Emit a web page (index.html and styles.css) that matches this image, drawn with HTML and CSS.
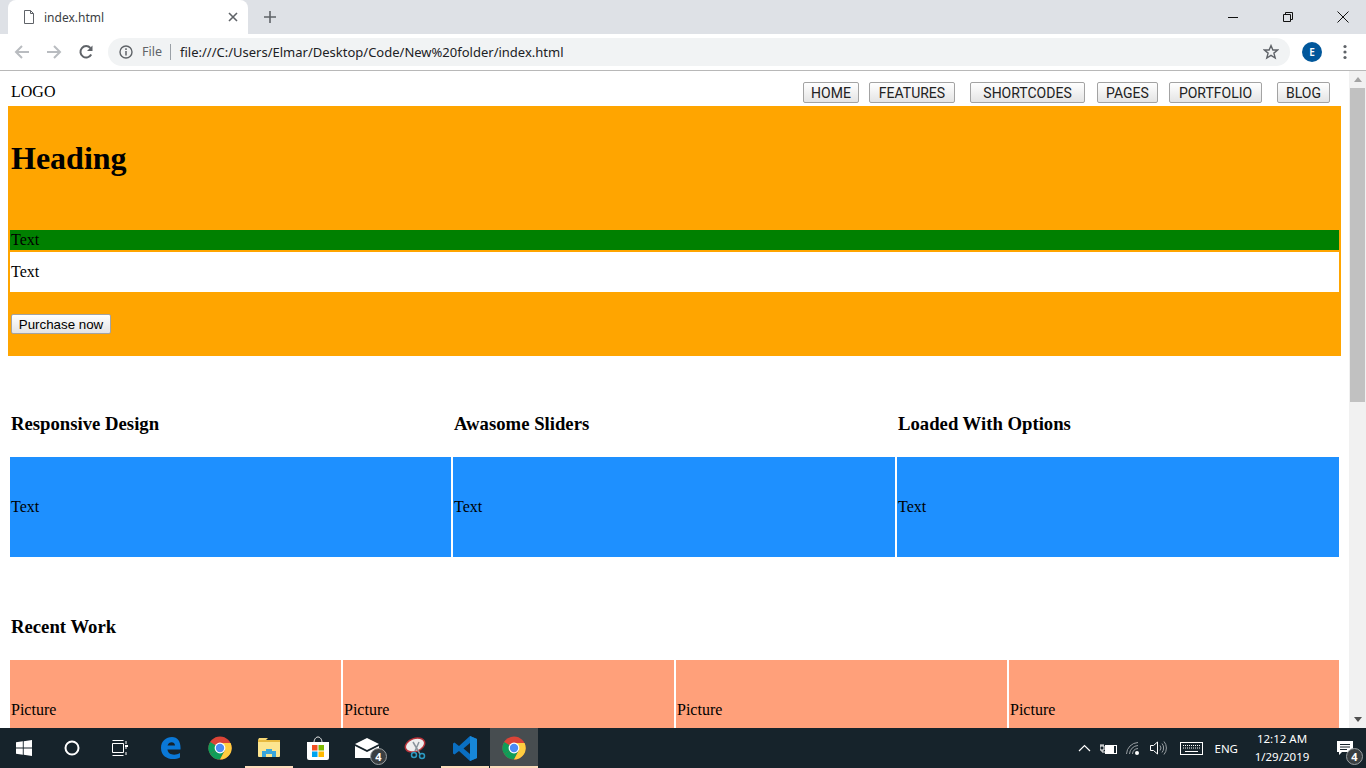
FILE: index.html
```html
<!DOCTYPE html>
<html lang="en">
<head>
<meta charset="utf-8">
<title>index.html</title>
<link rel="stylesheet" href="styles.css">
</head>
<body>
<svg class="defs" width="0" height="0">
  <defs>
    <symbol id="chrome" viewBox="0 0 24 24">
      <circle cx="12" cy="12" r="11.5" fill="#db4437"/>
      <path d="M12 12 L2 18 A11.5 11.5 0 0 1 2.2 6 Z" fill="#0f9d58"/>
      <path d="M12 12 L2 18 A11.5 11.5 0 0 0 12 23.5 L17 14 Z" fill="#0f9d58"/>
      <path d="M12 7 H22.6 A11.5 11.5 0 0 1 12 23.5 L17 14 Z" fill="#ffcd40"/>
      <circle cx="12" cy="12" r="5.4" fill="#fff"/>
      <circle cx="12" cy="12" r="4.2" fill="#4c8bf5"/>
    </symbol>
  </defs>
</svg>

<header class="browser">
  <div class="tabstrip">
    <div class="tab">
      <svg class="tab-file" width="12" height="14" viewBox="0 0 12 14"><path d="M1.5 .5H7.5L10.5 3.5V13.5H1.5ZM7.5 .5V3.5H10.5" fill="none" stroke="#5f6368"/></svg>
      <span class="tab-title">index.html</span>
      <svg class="tab-close" width="10" height="10" viewBox="0 0 10 10"><path d="M1 1L9 9M9 1L1 9" stroke="#5f6368" stroke-width="1.6"/></svg>
    </div>
    <svg class="tab-new" width="12" height="12" viewBox="0 0 12 12"><path d="M6 0V12M0 6H12" stroke="#5f6368" stroke-width="1.6"/></svg>
    <div class="winctl">
      <svg width="10" height="10" viewBox="0 0 10 10"><path d="M0 5.5H10" stroke="#111"/></svg>
      <svg width="10" height="10" viewBox="0 0 10 10"><path d="M2.5 2.5V.5H9.5V7.5H7.5M.5 2.5H7.5V9.5H.5Z" fill="none" stroke="#111"/></svg>
      <svg width="12" height="12" viewBox="0 0 12 12"><path d="M.5 .5L11.5 11.5M11.5 .5L.5 11.5" stroke="#111"/></svg>
    </div>
  </div>
  <div class="toolbar">
    <svg class="nav-ico" width="16" height="16" viewBox="0 0 16 16"><path d="M15 8H2M8 2L2 8L8 14" fill="none" stroke="#b9bcc0" stroke-width="2"/></svg>
    <svg class="nav-ico" width="16" height="16" viewBox="0 0 16 16"><path d="M1 8H14M8 2L14 8L8 14" fill="none" stroke="#b9bcc0" stroke-width="2"/></svg>
    <svg class="nav-ico" width="16" height="16" viewBox="0 0 16 16"><path d="M13.2 10.5A5.7 5.7 0 1 1 12.4 4" fill="none" stroke="#5f6368" stroke-width="2"/><path d="M14.5 1.5V7H9Z" fill="#5f6368"/></svg>
    <div class="omnibox">
      <svg class="info" width="14" height="14" viewBox="0 0 14 14"><circle cx="7" cy="7" r="6" fill="none" stroke="#5f6368" stroke-width="1.4"/><path d="M7 6V10.5M7 3.3V5" stroke="#5f6368" stroke-width="1.5"/></svg>
      <span class="scheme">File</span>
      <span class="url">file:///C:/Users/Elmar/Desktop/Code/New%20folder/index.html</span>
      <svg class="star" width="16" height="16" viewBox="0 0 16 16"><path d="M8 1.6L9.9 6H14.7L10.9 9.1L12.2 14L8 11.3L3.800 14L5.100 9.1L1.300 6H6.100Z" fill="none" stroke="#5f6368" stroke-width="1.400"/></svg>
    </div>
    <span class="avatar">E</span>
    <svg class="kebab" width="4" height="16" viewBox="0 0 4 16"><circle cx="2" cy="2.500" r="1.600" fill="#5f6368"/><circle cx="2" cy="8" r="1.600" fill="#5f6368"/><circle cx="2" cy="13.500" r="1.600" fill="#5f6368"/></svg>
  </div>
</header>

<div class="viewport">
  <main class="page">
    <nav class="topbar">
      <span class="logo">LOGO</span>
      <div class="menu">
        <button class="btn m-home">HOME</button>
        <button class="btn m-features">FEATURES</button>
        <button class="btn m-short">SHORTCODES</button>
        <button class="btn m-pages">PAGES</button>
        <button class="btn m-port">PORTFOLIO</button>
        <button class="btn m-blog">BLOG</button>
      </div>
    </nav>

    <section class="hero">
      <div class="hero-head"><h1>Heading</h1></div>
      <div class="hero-green">Text</div>
      <div class="hero-white">Text</div>
      <div class="hero-cta"><button class="btn-buy">Purchase now</button></div>
    </section>

    <section class="features">
      <h3>Responsive Design</h3>
      <h3>Awasome Sliders</h3>
      <h3>Loaded With Options</h3>
      <div class="cell-blue">Text</div>
      <div class="cell-blue">Text</div>
      <div class="cell-blue">Text</div>
    </section>

    <section class="work">
      <h3 class="work-title">Recent Work</h3>
      <div class="cell-pic">Picture</div>
      <div class="cell-pic">Picture</div>
      <div class="cell-pic">Picture</div>
      <div class="cell-pic">Picture</div>
    </section>
  </main>
  <aside class="scrollbar">
    <span class="arrow-up"></span>
    <span class="thumb"></span>
    <span class="arrow-down"></span>
  </aside>
</div>

<footer class="taskbar">
  <div class="tb-slot tb-first">
    <svg width="16" height="16" viewBox="0 0 16 16"><path d="M0 2.300L6.800 1.300V7.600H0ZM7.700 1.200L16 0V7.600H7.700ZM0 8.400H6.800V14.700L0 13.700ZM7.700 8.400H16V16L7.700 14.800Z" fill="#fff"/></svg>
  </div>
  <div class="tb-slot">
    <svg width="16" height="16" viewBox="0 0 16 16"><circle cx="8" cy="8" r="6.500" fill="none" stroke="#fff" stroke-width="2"/></svg>
  </div>
  <div class="tb-slot">
    <svg width="16" height="16" viewBox="0 0 16 16"><path d="M.5 3.500H11.500V12.500H.5ZM.5 .5H11.500M.5 15.500H11.500M14 1V4M14 7V9M14 12V15" fill="none" stroke="#fff"/><rect x="13" y="5" width="3" height="2" fill="#fff"/></svg>
  </div>
  <div class="tb-apps">
    <div class="tb-slot">
      <svg width="22" height="24" viewBox="0 0 22 24"><path d="M1 12C1 5 6 1 12 1C18 1 21 6 20.500 13.500H7.500C8 19 15 20 20 17V21.500C13 25 1 23 1 12ZM7.500 9.500H15C15 5 8.500 5 7.500 9.500Z" fill="#0a78d7"/></svg>
    </div>
    <div class="tb-slot"><svg width="24" height="24"><use href="#chrome"/></svg></div>
    <div class="tb-slot tb-open">
      <svg width="22" height="22" viewBox="0 0 22 22"><path d="M0 3H8L10 1H1Z" fill="#f7d774"/><rect y="3" width="22" height="17" rx="1" fill="#fde58f"/><rect y="3" width="22" height="2" fill="#e8b93f"/><path d="M4 20V14H8V12H14V14H18V20H14V17H8V20Z" fill="#3aa6dc"/></svg>
    </div>
    <div class="tb-slot">
      <svg width="22" height="24" viewBox="0 0 22 24"><path d="M7 7C7 -1 15 -1 15 7" fill="none" stroke="#fff"/><path d="M0 6H22V22A2 2 0 0 1 20 24H2A2 2 0 0 1 0 22Z" fill="#fff"/><rect x="5" y="9" width="5.500" height="5.500" fill="#f25022"/><rect x="11.500" y="9" width="5.500" height="5.500" fill="#7fba00"/><rect x="5" y="15.500" width="5.500" height="5.500" fill="#00a4ef"/><rect x="11.500" y="15.500" width="5.500" height="5.500" fill="#ffb900"/></svg>
    </div>
    <div class="tb-slot">
      <svg width="24" height="20" viewBox="0 0 24 20"><path d="M0 6L12 0L24 6L12 12Z" fill="#fff"/><path d="M0 8L12 14L24 8V20H0Z" fill="#fff"/></svg>
      <span class="badge badge-mail">4</span>
    </div>
    <div class="tb-slot">
      <svg width="24" height="24" viewBox="0 0 24 24"><ellipse cx="11" cy="9" rx="10" ry="6.500" transform="rotate(-20 11 9)" fill="#eee" stroke="#b8323a" stroke-width="1.500"/><path d="M9 6L16 18M15 6L11 15" stroke="#8a949c" stroke-width="1.500"/><circle cx="18" cy="20" r="2.500" fill="none" stroke="#2b9cc4" stroke-width="1.500"/><circle cx="10" cy="19" r="2.500" fill="none" stroke="#2b9cc4" stroke-width="1.500"/></svg>
    </div>
    <div class="tb-slot tb-open">
      <svg width="24" height="25" viewBox="0 0 24 25"><path d="M17 0L24 3V22L17 25L6 15L1.500 18.500L0 17.500V7.500L1.500 6.500L6 10ZM17 7L10.500 12.500L17 18Z" fill="#0a6fc2"/><path d="M17 0L24 3V22L17 25Z" fill="#1787d8"/></svg>
    </div>
    <div class="tb-slot tb-active"><svg width="24" height="24"><use href="#chrome"/></svg></div>
  </div>
  <div class="tray">
    <svg class="tray-ico" width="13" height="8" viewBox="0 0 13 8"><path d="M1 7L6.500 1.500L12 7" fill="none" stroke="#fff" stroke-width="1.200"/></svg>
    <svg class="tray-ico" width="17" height="11" viewBox="0 0 17 11"><rect x="5.500" y="2.500" width="11" height="8" fill="none" stroke="#fff"/><rect x="6" y="3" width="8" height="7" fill="#fff"/><path d="M0 3H4V7H0ZM1 1V3M3 1V3M2 7V9H6" stroke="#fff" fill="none"/></svg>
    <svg class="tray-ico" width="15" height="14" viewBox="0 0 15 14"><path d="M.5 13A12 12 0 0 1 12 1.500M3.500 13A9 9 0 0 1 12 4.500M6.500 13A6 6 0 0 1 12 7.500" fill="none" stroke="#9aa0a4"/><circle cx="11" cy="12" r="2" fill="#fff"/></svg>
    <svg class="tray-ico" width="17" height="14" viewBox="0 0 17 14"><path d="M.5 4.500H3.500L7.500 1V13L3.500 9.500H.5Z" fill="none" stroke="#fff"/><path d="M10 4.500A4 4 0 0 1 10 9.500M12 2.500A7 7 0 0 1 12 11.500M14 .5A10 10 0 0 1 14 13.500" fill="none" stroke="#9aa0a4"/></svg>
    <svg class="tray-kb" width="23" height="13" viewBox="0 0 23 13"><rect x=".5" y=".5" width="22" height="12" fill="none" stroke="#fff"/><path d="M3 3.500H20M3 6H20" stroke="#fff" stroke-dasharray="1 1"/><path d="M5 9.500H18" stroke="#fff"/></svg>
    <span class="tray-lang">ENG</span>
    <div class="clock"><span>12:12 AM</span><span>1/29/2019</span></div>
    <div class="notif">
      <svg width="16" height="15" viewBox="0 0 16 15"><path d="M0 0H16V11H5L2 14V11H0Z" fill="#fff"/><path d="M3 3.500H13M3 6H13M3 8.500H10" stroke="#16232b"/></svg>
      <span class="badge badge-notif">4</span>
    </div>
  </div>
</footer>
</body>
</html>
```

FILE: styles.css
```css
* { box-sizing: border-box; }
html, body { margin: 0; height: 100%; overflow: hidden; }
body { width: 1366px; height: 768px; display: flex; flex-direction: column; font-family: "Liberation Serif", serif; font-size: 16px; color: #000; background: #fff; }
.defs { position: absolute; }

/* Browser chrome */
.browser { height: 71px; flex: none; font-family: "Noto Sans", Roboto, sans-serif; border-bottom: 1px solid #b8b8b8; }
.tabstrip { height: 34px; background: #dee1e6; display: flex; align-items: center; padding-left: 8px; }
.tab { width: 240px; height: 34px; margin-top: 0; background: #fff; border-radius: 8px 8px 0 0; display: flex; align-items: center; padding: 0 10px 0 15px; }
.tab-file { margin-right: 9px; flex: none; }
.tab-title { font-size: 12px; color: #3c4043; flex: 1; }
.tab-new { margin-left: 16px; }
.winctl { margin-left: auto; width: 138px; display: flex; align-items: center; justify-content: space-between; padding: 0 17px 0 0; }
.winctl svg:first-child { margin-left: 0; }
.toolbar { height: 36px; background: #fff; display: flex; align-items: center; padding-left: 14px; }
.nav-ico { margin-right: 16px; flex: none; }
.omnibox { width: 1182px; height: 28px; margin-left: -2px; background: #f1f3f4; border-radius: 14px; display: flex; align-items: center; padding: 0 11px 0 11px; }
.info { flex: none; margin-right: 9px; }
.scheme { font-size: 12.5px; color: #5f6368; padding-right: 8px; border-right: 1px solid #9aa0a6; line-height: 16px; margin-right: 9px; }
.url { font-size: 13px; color: #202124; flex: 1; }
.star { flex: none; }
.avatar { width: 20px; height: 20px; margin-left: 12px; border-radius: 50%; background: #01579b; color: #fff; font-size: 10px; font-weight: 600; display: flex; align-items: center; justify-content: center; flex: none; }
.kebab { margin-left: 21px; flex: none; }

/* Viewport */
.viewport { height: 657px; flex: none; display: flex; overflow: hidden; }
.page { width: 1349px; flex: none; padding: 0 8px; overflow: hidden; }
.topbar { height: 35px; display: flex; justify-content: space-between; padding: 11px 11px 0 3px; }
.logo { line-height: 20px; }
.menu { display: flex; height: 21px; }
.btn { height: 21px; font: 14px Roboto, sans-serif; color: #222; padding: 0; border: 1px solid #a3a3a3; border-radius: 2px; background: linear-gradient(#fff, #e4e4e4); }
.m-home { width: 56px; }
.m-features { width: 86px; margin-left: 10px; }
.m-short { width: 115px; margin-left: 15px; }
.m-pages { width: 61px; margin-left: 12px; }
.m-port { width: 93px; margin-left: 11px; }
.m-blog { width: 53px; margin-left: 15px; }

.hero { height: 250px; background: #ffa500; padding: 2px; display: grid; grid-template-rows: 120px 20px 40px 60px; row-gap: 2px; }
.hero-head { padding: 1px; }
h1 { font-size: 32px; font-weight: 700; line-height: 37px; margin: 31px 0 0; }
.hero-green { background: #008000; padding: 1px; line-height: 18px; }
.hero-white { background: #fff; padding: 1px; display: flex; align-items: center; }
.hero-cta { padding: 20px 1px 0; }
.btn-buy { display: block; width: 100px; height: 20px; padding: 0; font: 13.333px "Liberation Sans", Arial, sans-serif; color: #000; border: 1px solid #a3a3a3; border-radius: 2px; background: linear-gradient(#fff, #e4e4e4); }

h3 { font-size: 18.72px; font-weight: 700; line-height: 22px; margin: 0; padding: 0 1px; }
.features { display: grid; grid-template-columns: 441px 442px 442px; column-gap: 2px; padding: 0 2px; margin-top: 57px; grid-template-rows: 22px 100px; row-gap: 22px; }
.cell-blue { background: #1e90ff; display: flex; align-items: center; padding: 0 1px; }
.work { display: grid; grid-template-columns: 331px 331px 331px 330px; column-gap: 2px; padding: 0 2px; margin-top: 59px; grid-template-rows: 22px 100px; row-gap: 22px; }
.work-title { grid-column: 1 / -1; }
.cell-pic { background: #ffa07a; display: flex; align-items: center; padding: 0 1px; }

/* Scrollbar */
.scrollbar { width: 17px; flex: none; background: #f1f1f1; display: flex; flex-direction: column; align-items: center; padding-top: 6px; }
.arrow-up { border: 4px solid transparent; border-top: 0; border-bottom: 5px solid #a3a3a3; }
.thumb { width: 15px; height: 314px; background: #c1c1c1; margin-top: 6px; }
.arrow-down { margin-top: auto; margin-bottom: 6px; border: 4px solid transparent; border-bottom: 0; border-top: 5px solid #505050; }

/* Taskbar */
.taskbar { height: 40px; flex: none; background: #16232b; display: flex; align-items: center; font-family: "Noto Sans", Roboto, sans-serif; color: #fff; }
.tb-slot { position: relative; width: 48px; height: 40px; display: flex; align-items: center; justify-content: center; flex: none; }
.tb-apps { display: flex; gap: 1px; margin-left: 3px; }
.tb-open { border-bottom: 2px solid #fcdcbc; padding-top: 2px; }
.tb-active { background: #474d50; border-bottom: 2px solid #fcdcbc; padding-top: 2px; }
.badge { position: absolute; width: 17px; height: 17px; border-radius: 50%; background: #3a3f42; border: 1px solid #9a9fa2; color: #fff; font-size: 11px; font-weight: 700; display: flex; align-items: center; justify-content: center; }
.badge-mail { right: 4px; top: 20px; }
.tray { margin-left: auto; display: flex; align-items: center; height: 40px; }
.tray-ico { margin-right: 9px; flex: none; }
.tray-kb { margin-left: 4px; flex: none; }
.tray-lang { font-size: 11.5px; margin-left: 11px; }
.clock { width: 80px; margin-left: 4px; display: flex; flex-direction: column; align-items: center; font-size: 11.5px; line-height: 18px; }
.notif { position: relative; width: 42px; height: 40px; display: flex; align-items: center; justify-content: center; margin-left: 2px; }
.badge-notif { right: 3px; top: 20px; }
```
